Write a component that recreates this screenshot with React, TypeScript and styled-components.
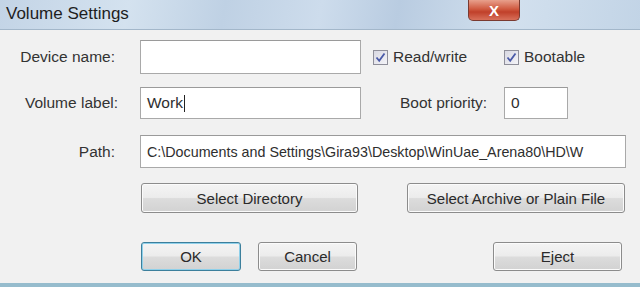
import React from 'react';
import styled, { createGlobalStyle } from 'styled-components';

const Global = createGlobalStyle`
    html, body {
        margin: 0;
        padding: 0;
        width: 640px;
        height: 287px;
        overflow: hidden;
        background: #f0f0f0;
    }
`;

const Window = styled.div`
    width: 640px;
    height: 287px;
    display: flex;
    flex-direction: column;
    font-family: 'Liberation Sans', Arial, sans-serif;
    font-size: 15.5px;
    color: #333;
    background: #f1f1f1;
    border-bottom: 4px solid #96bccd;
    box-sizing: border-box;
`;

const TitleBar = styled.div`
    height: 29px;
    flex: none;
    display: flex;
    align-items: flex-start;
    justify-content: space-between;
    border-bottom: 1px solid #a3b7ca;
    background: linear-gradient(
        100deg,
        #c3d4e6 0%,
        #d4e2ef 20%,
        #bfd1e4 35%,
        #cddcec 50%,
        #b9cce1 62%,
        #d2e0ee 80%,
        #c2d4e6 100%
    );
`;

const Title = styled.span`
    font-size: 17px;
    color: #1e1e1e;
    padding: 4px 0 0 6px;
`;

const CloseButton = styled.div`
    width: 52px;
    height: 21px;
    margin-right: 120px;
    border: 1px solid #7a3a30;
    border-top: none;
    border-radius: 0 0 5px 5px;
    background: linear-gradient(#e8a08c, #d05a40 45%, #c0402a 60%, #d8705a);
    color: #fff;
    font-weight: bold;
    font-size: 15px;
    display: flex;
    align-items: center;
    justify-content: center;
    box-sizing: border-box;
`;

const Body = styled.div`
    flex: 1;
    padding-top: 10px;
    display: flex;
    flex-direction: column;
`;

const Row = styled.div<{ $h: number; $mt?: number }>`
    display: flex;
    align-items: center;
    height: ${(p) => p.$h}px;
    margin-top: ${(p) => p.$mt ?? 0}px;
`;

const Label = styled.label<{ $w: number; $pr?: number }>`
    width: ${(p) => p.$w}px;
    padding-right: ${(p) => p.$pr ?? 25}px;
    text-align: right;
    box-sizing: border-box;
    flex: none;
    white-space: nowrap;
`;

const Input = styled.div<{ $w: number; $small?: boolean }>`
    width: ${(p) => p.$w}px;
    height: 100%;
    box-sizing: border-box;
    border: 1px solid #a9a9a9;
    border-top-color: #9a9a9a;
    background: #fff;
    padding: 0 6px;
    display: flex;
    align-items: center;
    color: #2e2e2e;
    font-size: ${(p) => (p.$small ? '14.3px' : 'inherit')};
    white-space: nowrap;
    overflow: hidden;
    flex: none;
`;

const Caret = styled.span`
    display: inline-block;
    width: 1px;
    height: 17px;
    background: #222;
    margin-left: 1px;
`;

const Check = styled.label<{ $w: number; $ml?: number }>`
    display: flex;
    align-items: center;
    gap: 5px;
    width: ${(p) => p.$w}px;
    margin-left: ${(p) => p.$ml ?? 0}px;
    flex: none;
`;

const Box = styled.span`
    width: 15px;
    height: 15px;
    box-sizing: border-box;
    border: 1px solid #8f8f9a;
    background: linear-gradient(135deg, #d8d8e2, #f4f4f8);
    display: flex;
    align-items: center;
    justify-content: center;
`;

const Button = styled.div<{ $w: number; $ml: number; $focus?: boolean }>`
    width: ${(p) => p.$w}px;
    height: 100%;
    margin-left: ${(p) => p.$ml}px;
    box-sizing: border-box;
    border: 1px solid ${(p) => (p.$focus ? '#3c7f9c' : '#8c8c8c')};
    box-shadow: ${(p) => (p.$focus ? 'inset 0 0 0 1px #8fd0ea' : 'inset 0 0 0 1px #fbfbfb')};
    border-radius: 3px;
    background: linear-gradient(#f4f4f4 0%, #ececec 48%, #dcdcdc 52%, #d2d2d2 100%);
    display: flex;
    align-items: center;
    justify-content: center;
    color: #2a2a2a;
    font-size: 15px;
    flex: none;
`;

const CheckMark = () => (
    <svg width="11" height="11" viewBox="0 0 11 11">
        <path d="M1.5 5.5 L4.2 8.8 L9.5 1.5" fill="none" stroke="#4a5aa8" strokeWidth="1.8" />
    </svg>
);

export default function App() {
    return (
        <>
            <Global />
            <Window>
                <TitleBar>
                    <Title>Volume Settings</Title>
                    <CloseButton>X</CloseButton>
                </TitleBar>
                <Body>
                    <Row $h={34}>
                        <Label $w={140}>Device name:</Label>
                        <Input $w={221} />
                        <Check $w={131} $ml={12}>
                            <Box>
                                <CheckMark />
                            </Box>
                            Read/write
                        </Check>
                        <Check $w={100}>
                            <Box>
                                <CheckMark />
                            </Box>
                            Bootable
                        </Check>
                    </Row>
                    <Row $h={32} $mt={13}>
                        <Label $w={140} $pr={22}>Volume label:</Label>
                        <Input $w={221}>
                            Work
                            <Caret />
                        </Input>
                        <Label $w={143} $pr={17}>Boot priority:</Label>
                        <Input $w={64}>0</Input>
                    </Row>
                    <Row $h={33} $mt={16}>
                        <Label $w={140}>Path:</Label>
                        <Input $w={486} $small>
                            C:\Documents and Settings\Gira93\Desktop\WinUae_Arena80\HD\W
                        </Input>
                    </Row>
                    <Row $h={30} $mt={15}>
                        <Button $w={217} $ml={141}>Select Directory</Button>
                        <Button $w={218} $ml={49}>Select Archive or Plain File</Button>
                    </Row>
                    <Row $h={29} $mt={29}>
                        <Button $w={100} $ml={141} $focus>
                            OK
                        </Button>
                        <Button $w={99} $ml={17}>Cancel</Button>
                        <Button $w={129} $ml={136}>Eject</Button>
                    </Row>
                </Body>
            </Window>
        </>
    );
}
